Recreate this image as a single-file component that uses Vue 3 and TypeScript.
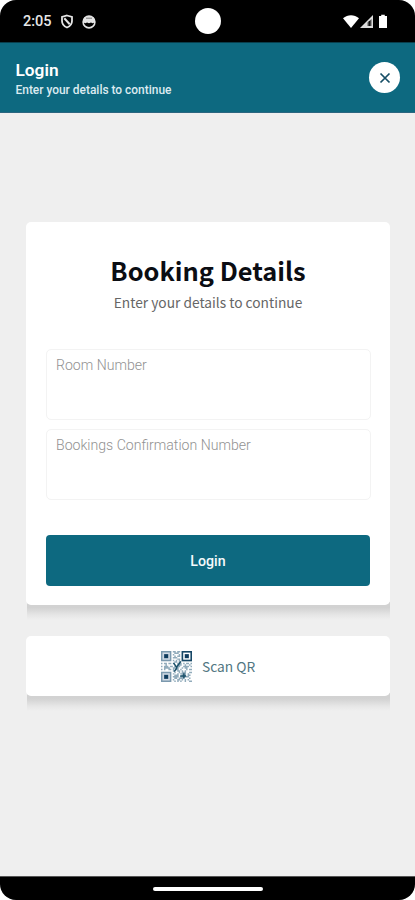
<script setup lang="ts">
import { ref } from 'vue'

const fields = ref([
  { id: 'room', label: 'Room Number', value: '' },
  { id: 'booking', label: 'Bookings Confirmation Number', value: '' },
])

const qrRows: string[] = [
  '#######.##.##.#######',
  '#.....#..###..#.....#',
  '#.###.#.#...#.#.###.#',
  '#.###.#..#.##.#.###.#',
  '#.###.#.###...#.###.#',
  '#.....#....##.#.....#',
  '#######.#.#.#.#######',
  '.........##.#........',
  '#.##.##.#..###.#.##.#',
  '...#.......###..#..#.',
  '#.###.##.#.##..####.#',
  '..####..##.#..#.##...',
  '#.#..##.#.##.#...#.##',
  '........#..##.#.#....',
  '#######..#..#.###..##',
  '#.....#.#..#.####.#..',
  '#.###.#..###..###.##.',
  '#.###.#.####.######..',
  '#.###.#..##.####...#.',
  '#.....#.#..##.#.#.#..',
  '#######..#.#.#..#..##',
]

const qrPath = qrRows
  .map((row, y) => [...row].map((c, x) => (c === '#' ? `M${x} ${y}h1v1h-1z` : '')).join(''))
  .join('')
</script>

<template>
  <div class="phone">
    <div class="status">
      <div class="status-left">
        <span class="time">2:05</span>
        <svg class="shield" viewBox="0 0 14 15">
          <path d="M7 1.500 12 3v4c0 3.200-2 5.300-5 6.500-3-1.200-5-3.300-5-6.500V3z" fill="none" stroke="#e4e4e4" stroke-width="1.800" />
          <path d="M4.300 4.300 9.700 10.200" stroke="#e4e4e4" stroke-width="2" />
        </svg>
        <svg class="face" viewBox="0 0 14 14">
          <circle cx="7" cy="7" r="5.900" fill="none" stroke="#e4e4e4" stroke-width="1.600" />
          <path d="M1.300 4.500 3 2h8l1.700 2.500v3l-2.200.7-1.500-.8-2 .8-2-.8-1.500.8-2.200-.7z" fill="#e4e4e4" />
          <path d="M4 3.200h6" stroke="#777" />
        </svg>
      </div>
      <div class="camera"></div>
      <div class="status-right">
        <svg viewBox="0 0 46 16">
          <path d="M0 4.300C4.800.1 11.200.1 16 4.300L8 14z" fill="#fff" />
          <path d="M17 14 30 1v13z" fill="#ddd" />
          <path d="M24.500 8.500 28.500 5v7h-4z" fill="#555" />
          <path d="M26.500 7v5" stroke="#111" stroke-width="1.400" />
          <path d="M36 2h2.200V.7h3.600V2H44v12h-8z" fill="#fff" />
        </svg>
      </div>
    </div>

    <header class="header">
      <div>
        <h1>Login</h1>
        <p>Enter your details to continue</p>
      </div>
      <button class="close" aria-label="Close">
        <svg viewBox="0 0 12 12"><path d="M1.500 1.500 10.500 10.500M10.500 1.500 1.500 10.500" stroke="#164e66" stroke-width="1.700" /></svg>
      </button>
    </header>

    <main class="content">
      <section class="card raised">
        <h2>Booking Details</h2>
        <p class="subtitle">Enter your details to continue</p>
        <div class="fields">
          <div v-for="field in fields" :key="field.id" class="field">{{ field.label }}</div>
        </div>
        <button class="login">Login</button>
      </section>

      <button class="scan raised">
        <svg class="qr" viewBox="0 0 21 21">
          <path d="M0 0h7v7H0zM0 14h7v7H0z" fill="#d3dbe5" />
          <path :d="qrPath" fill="#235877" fill-opacity=".5" />
          <path d="M2.200 2.200h2.600v2.600H2.200zM16.200 2.200h2.600v2.600h-2.600zM2.200 16.200h2.600v2.600H2.200z" fill="#103b5d" />
          <path d="M14.500.5h6v6h-6z" fill="none" stroke="#174766" />
          <path d="m8.500 8 2 3 3-4M9 14l2-3M13 17h4M15.500 15v3.500" fill="none" stroke="#1a5069" />
        </svg>
        <span>Scan QR</span>
      </button>
    </main>

    <footer class="navbar"><div class="handle"></div></footer>
  </div>
</template>

<style>
body {
  background: #fff;
}
</style>

<style scoped>
.phone {
  width: 415px;
  height: 900px;
  display: flex;
  flex-direction: column;
  overflow: hidden;
  border-radius: 16px;
  background: #efefef;
  font-family: Roboto, sans-serif;
}
h1, h2, p {
  margin: 0;
}
button {
  border: 0;
  padding: 0;
  font: inherit;
}
svg {
  display: block;
}
.status {
  box-sizing: border-box;
  height: 42px;
  flex: none;
  display: grid;
  grid-template-columns: 172px 26px 1fr;
  align-items: center;
  padding: 0 26px 0 23px;
  background: #000;
}
.status-left {
  display: flex;
  align-items: center;
  padding-top: 2px;
}
.time {
  width: 37px;
  color: #e6e6e6;
  font-size: 14.500px;
  font-weight: 500;
  line-height: 18px;
}
.shield {
  width: 14px;
  height: 15px;
  margin: 0 8px 1px 0;
}
.face {
  width: 14px;
  height: 14px;
  margin-bottom: 1px;
}
.camera {
  width: 26px;
  height: 26px;
  border-radius: 50%;
  background: #fff;
}
.status-right {
  display: flex;
  justify-content: flex-end;
  padding-top: 2px;
}
.status-right svg {
  width: 46px;
  height: 16px;
}
.header {
  box-sizing: border-box;
  height: 71px;
  flex: none;
  display: flex;
  justify-content: space-between;
  align-items: center;
  padding: 0 15px 0 15.500px;
  color: #fff;
  background: #0d6980;
  border-top: 1px solid #093e4c;
  border-bottom: 1px solid #2b6680;
}
.header h1 {
  padding-top: 5px;
  font-size: 17.300px;
  line-height: 20px;
  font-weight: 600;
}
.header p {
  font-size: 11.950px;
  line-height: 20px;
  font-weight: 500;
  color: #dcebf0;
}
.close {
  width: 31px;
  height: 31px;
  border-radius: 50%;
  background: #fff;
  display: grid;
  place-items: center;
}
.close svg {
  width: 12px;
  height: 12px;
}
.content {
  flex: 1;
  padding: 109px 25px 0 26px;
}
.raised {
  position: relative;
  z-index: 0;
  background: none;
}
.raised::before,
.raised::after {
  content: "";
  position: absolute;
  left: 0;
  right: 0;
}
.raised::before {
  top: 0;
  bottom: 0;
  z-index: -1;
  border-radius: 5px;
  background: #fff;
}
.raised::after {
  left: 1px;
  bottom: -15px;
  height: 18px;
  z-index: -2;
  background: linear-gradient(#d2d2d2 30%, #d7d7d7 42%, #e6e6e6 72%, #efefef);
}
.card {
  box-sizing: border-box;
  height: 383px;
  padding: 30px 20px 20px;
  text-align: center;
}
.card h2 {
  font-family: "Noto Sans CJK SC", sans-serif;
  font-size: 25.400px;
  line-height: 36px;
  font-weight: 700;
  color: #0b0d13;
}
.subtitle {
  padding-top: 3px;
  font-family: "Noto Sans CJK SC", sans-serif;
  font-size: 13.750px;
  line-height: 22px;
  color: #666;
}
.fields {
  display: grid;
  gap: 9px;
  padding-top: 36px;
}
.field {
  box-sizing: border-box;
  width: 325px;
  height: 71px;
  padding: 6px 9px;
  border: 1px solid #f3f3f3;
  border-radius: 5px;
  text-align: left;
  font-size: 14.100px;
  line-height: 18px;
  font-weight: 300;
  color: #929292;
}
.login {
  box-sizing: border-box;
  width: 324px;
  height: 51px;
  margin-top: 35px;
  display: grid;
  place-items: center;
  border-radius: 4px;
  background: #0d6980;
  color: #f5fafc;
  font-size: 14.200px;
  font-weight: 500;
}
.scan {
  width: 100%;
  height: 60px;
  margin-top: 31px;
  display: flex;
  align-items: center;
  padding-left: 135px;
  gap: 10px;
  font-family: "Noto Sans CJK SC", sans-serif;
  font-size: 13.750px;
  color: #527782;
}
.scan span {
  padding-bottom: 1px;
}
.qr {
  width: 31px;
  height: 31px;
}
.navbar {
  box-sizing: border-box;
  height: 24px;
  flex: none;
  display: flex;
  justify-content: center;
  align-items: center;
  background: #000;
  border-top: 1px solid #555;
}
.handle {
  width: 110px;
  height: 4px;
  border-radius: 2px;
  background: #fff;
}
</style>
